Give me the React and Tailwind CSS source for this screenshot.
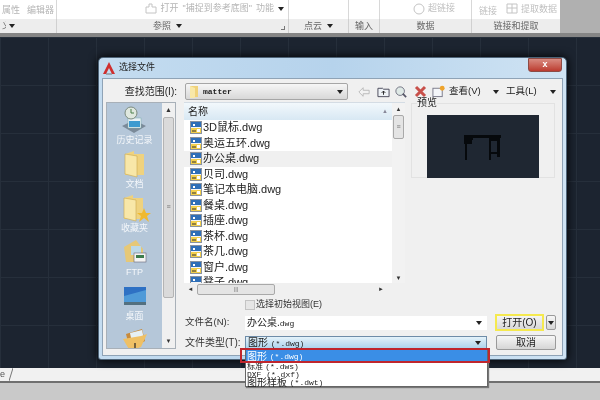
const FONT = "font-['Liberation_Sans','Noto_Sans_CJK_SC',sans-serif]";

function FileIcon() {
  return (
    <svg width="12" height="13" viewBox="0 0 12 13" className="shrink-0">
      <rect x="0.5" y="0.5" width="11" height="12" fill="#f4f4f4" stroke="#8a93a0" />
      <rect x="1" y="1" width="10" height="5" fill="#2f6fb8" />
      <rect x="1" y="7" width="10" height="5" fill="#f2cf4d" />
      <path d="M3 3h2v2H3zM7 8h3v3H7z" fill="#fff" />
      <path d="M2 10h4" stroke="#333" strokeWidth="1" />
    </svg>
  );
}

function Folder({ className = "" }) {
  return (
    <svg width="24" height="28" viewBox="0 0 24 28" className={className}>
      <path d="M2 4l9-3v3h10v21H2z" fill="#efd27e" />
      <path d="M2 4l12 2v21L2 24z" fill="#f8e7a8" stroke="#c9a84e" strokeWidth="0.6" />
    </svg>
  );
}

function Arrow({ className = "" }) {
  return <span className={`shrink-0 w-0 h-0 border-l-[3px] border-r-[3px] border-t-[4px] border-l-transparent border-r-transparent border-t-[#222] ${className}`} />;
}

function HistoryIcon() {
  return (
    <svg width="26" height="28" viewBox="0 0 26 28">
      <path d="M1 20l12-6 12 6-12 7z" fill="#7b8a99" />
      <rect x="7" y="12" width="13" height="10" fill="#e9f1f6" stroke="#7aa" strokeWidth="0.5" />
      <rect x="8" y="15" width="11" height="6" fill="#3d9ad0" />
      <circle cx="10" cy="7" r="6" fill="#dfe8df" stroke="#7d8c80" />
      <path d="M10 3v4h3" stroke="#4b7f4b" fill="none" />
    </svg>
  );
}

function StarFolder() {
  return (
    <div className="relative">
      <Folder />
      <svg width="14" height="14" viewBox="0 0 14 14" className="absolute right-[-5px] bottom-[0px]">
        <path d="M7 0l2 5h5l-4 3 2 6-5-4-5 4 2-6-4-3h5z" fill="#f0b92f" />
      </svg>
    </div>
  );
}

function FtpIcon() {
  return (
    <svg width="26" height="26" viewBox="0 0 26 26">
      <path d="M2 8l12-7 7 9v13H4z" fill="#e6c877" />
      <rect x="9" y="7" width="10" height="9" fill="#bcd9e8" />
      <rect x="12" y="14" width="12" height="9" fill="#f3f3f3" stroke="#667" strokeWidth="0.6" />
      <rect x="14" y="16" width="8" height="3" fill="#3d7d4d" />
    </svg>
  );
}

function DesktopIcon() {
  return (
    <svg width="22" height="18" viewBox="0 0 22 18">
      <rect x="0" y="0" width="22" height="15" fill="#2e71c4" />
      <path d="M0 9l22-6v12H0z" fill="#4f9ad8" />
      <rect x="0" y="15" width="22" height="3" fill="#54707f" />
    </svg>
  );
}

function OpenFolderIcon() {
  return (
    <svg width="26" height="24" viewBox="0 0 26 24">
      <path d="M4 6l16-5 3 12-15 9z" fill="#c88a3a" />
      <path d="M8 5l12-3 2 9-12 4z" fill="#e6f0f6" />
      <path d="M1 11l18-3 6-2-6 13-11 4z" fill="#efc065" />
      <path d="M13 15v6" stroke="#222" strokeWidth="1.2" />
    </svg>
  );
}

function SideItem({ icon, label }) {
  return (
    <div className="flex flex-col items-center h-[44px] shrink-0">
      <div className="h-[28px] flex items-center justify-center">{icon}</div>
      <span className="text-[9px] leading-[12px] text-[#f4f7fa]">{label}</span>
    </div>
  );
}

function Btn({ children, className = "" }) {
  return <div className={`flex items-center justify-center border border-[#9a9a9a] rounded-[2px] bg-gradient-to-b from-[#f6f6f6] to-[#d6d6d6] ${className}`}>{children}</div>;
}

const FILES = ["3D鼠标.dwg", "奥运五环.dwg", "办公桌.dwg", "贝司.dwg", "笔记本电脑.dwg", "餐桌.dwg", "插座.dwg", "茶杯.dwg", "茶几.dwg", "窗户.dwg", "凳子.dwg"];

function Ribbon() {
  return (
    <div className="h-[37px] shrink-0 flex flex-col bg-white text-[#8f8f8f] text-[9px] overflow-hidden border-b-[4px] border-[#858585]">
      <div className="flex h-[19px] shrink-0">
        <div className="w-[57px] border-r border-[#d8d8d8] pl-[2px] leading-[10px] text-[#b5b5b5]">
          <div className="mt-[5px] flex gap-[7px]"><span>属性</span><span>编辑器</span></div>
        </div>
        <div className="w-[232px] border-r border-[#d8d8d8] flex items-start justify-end pr-[4px] pt-[3px] text-[#b5b5b5] gap-[4px] leading-[11px]">
          <svg width="12" height="11" viewBox="0 0 12 11"><path d="M1 4h3V1h3v3h4v6H1z" fill="none" stroke="#c4c4c4" /></svg>
          <span>打开</span>
          <span>"捕捉到参考底图"</span>
          <span>功能</span>
          <Arrow className="mt-[4px]" />
        </div>
        <div className="w-[60px] border-r border-[#d8d8d8]" />
        <div className="w-[31px] border-r border-[#d8d8d8]" />
        <div className="w-[92px] border-r border-[#d8d8d8] flex justify-end items-start gap-[3px] pr-[16px] pt-[3px] text-[#c0c0c0] leading-[11px]">
          <svg width="12" height="12" viewBox="0 0 12 12"><circle cx="6" cy="6" r="5" fill="none" stroke="#c4c4c4" /></svg>
          <span>超链接</span>
        </div>
        <div className="w-[88px] flex pl-[7px] pt-[6px] text-[#c0c0c0] leading-[10px]">
          <span>链接</span>
          <svg width="12" height="11" viewBox="0 0 12 11" className="ml-[9px] mt-[-3px]"><path d="M1 1h10v9H1zM1 5h10M6 1v9" fill="none" stroke="#c4c4c4" /></svg>
          <span className="ml-[3px] mt-[-2px]">提取数据</span>
        </div>
        <div className="flex-1 bg-[#b0b0b0]" />
      </div>
      <div className="flex flex-1 bg-[#ededed] text-[9px] text-[#666] leading-[13px]">
        <div className="w-[57px] border-r border-[#d0d0d0] flex items-center pl-[2px] gap-[3px]"><span className="w-[4px] overflow-hidden">义</span><Arrow /></div>
        <div className="relative w-[232px] border-r border-[#d0d0d0] flex items-center justify-center gap-[5px] pr-[10px]">
          <span>参照</span><Arrow />
          <span className="absolute right-[3px] bottom-[3px] w-[4px] h-[4px] border-r border-b border-[#777]" />
        </div>
        <div className="w-[60px] border-r border-[#d0d0d0] flex items-center justify-center gap-[5px]"><span>点云</span><Arrow /></div>
        <div className="w-[31px] border-r border-[#d0d0d0] flex items-center justify-center"><span>输入</span></div>
        <div className="w-[92px] border-r border-[#d0d0d0] flex items-center justify-center"><span>数据</span></div>
        <div className="w-[88px] flex items-center justify-center"><span>链接和提取</span></div>
        <div className="flex-1 bg-[#b0b0b0]" />
      </div>
    </div>
  );
}

function Toolbar() {
  return (
    <div className="flex items-center ml-[10px] text-[9.5px] text-[#222] shrink-0">
      <svg width="12" height="12" viewBox="0 0 14 12"><path d="M1 6l5-5v3h7v4H6v3z" fill="#f2f2f2" stroke="#b4b4b4" /></svg>
      <svg width="13" height="12" viewBox="0 0 14 12" className="ml-[7px]"><path d="M1 2h5l1 1h6v8H1z" fill="#eef2f6" stroke="#445" /><path d="M7 9V5M5 7l2-2 2 2" stroke="#222" fill="none" /></svg>
      <svg width="12" height="14" viewBox="0 0 14 14" className="ml-[5px]"><circle cx="6" cy="6" r="5" fill="#dfe9e6" stroke="#667" /><path d="M9 9l4 4" stroke="#556" strokeWidth="2" /></svg>
      <svg width="13" height="13" viewBox="0 0 13 13" className="ml-[7px]"><path d="M2 2l9 9M11 2l-9 9" stroke="#c8504a" strokeWidth="3" /></svg>
      <svg width="13" height="13" viewBox="0 0 14 13" className="ml-[5px]"><rect x="1" y="3" width="10" height="9" fill="#f5f7fa" stroke="#778" /><circle cx="11" cy="3" r="2.6" fill="#eea32b" /></svg>
      <span className="whitespace-nowrap ml-[4px] w-[32px]">查看(V)</span>
      <Arrow className="ml-[12px]" />
      <span className="whitespace-nowrap ml-[7px] w-[32px]">工具(L)</span>
      <Arrow className="ml-[12px]" />
    </div>
  );
}

function Sidebar() {
  return (
    <div className="w-[70px] border border-[#a8b0b8] flex shrink-0 bg-white">
      <div className="flex-1 bg-[#b5c7d9] flex flex-col items-center pt-[3px] overflow-hidden">
        <SideItem icon={<HistoryIcon />} label="历史记录" />
        <SideItem icon={<Folder />} label="文档" />
        <SideItem icon={<StarFolder />} label="收藏夹" />
        <SideItem icon={<FtpIcon />} label="FTP" />
        <SideItem icon={<DesktopIcon />} label="桌面" />
        <SideItem icon={<OpenFolderIcon />} label="" />
      </div>
      <div className="w-[13px] bg-[#f0f0f0] flex flex-col items-center">
        <span className="text-[7px] leading-[14px] text-[#333]">▲</span>
        <div className="w-[11px] h-[181px] border border-[#b4b4b4] rounded-[2px] bg-[#dadada] flex items-center justify-center text-[7px] text-[#777]">≡</div>
        <div className="flex-1" />
        <span className="text-[6px] leading-[14px] text-[#333]">▼</span>
      </div>
    </div>
  );
}

function FileList() {
  return (
    <div className="w-[221px] h-[193px] border-t border-[#d4dce4] bg-white flex flex-col shrink-0">
      <div className="flex flex-1 min-h-0">
        <div className="flex-1 min-w-0 flex flex-col overflow-hidden">
          <div className="h-[17px] shrink-0 bg-gradient-to-b from-[#f2f8fc] to-[#d8e8f3] flex items-center justify-between pl-[4px] pr-[4px] text-[10px] text-[#222]">
            <span>名称</span><span className="text-[6px] text-[#889]">▲</span>
          </div>
          <div className="flex flex-col">
            {FILES.map((f) => (
              <div key={f} className={`h-[15.5px] shrink-0 flex items-center pl-[6px] gap-[1px] text-[11px] leading-none text-[#222] whitespace-nowrap ${f === "办公桌.dwg" ? "bg-[#f0f0f0]" : ""}`}>
                <FileIcon /><span>{f}</span>
              </div>
            ))}
          </div>
        </div>
        <div className="w-[13px] bg-[#f2f2f2] flex flex-col items-center shrink-0">
          <span className="text-[6px] leading-[12px] text-[#333]">▲</span>
          <div className="w-[11px] h-[24px] border border-[#a9a9a9] rounded-[2px] bg-[#e4e4e4] flex items-center justify-center text-[7px] text-[#777]">≡</div>
          <div className="flex-1" />
          <span className="text-[6px] leading-[10px] text-[#333]">▼</span>
        </div>
      </div>
      <div className="h-[12px] shrink-0 bg-[#f0f0f0] flex items-center">
        <span className="w-[13px] text-[6px] text-center text-[#333]">◄</span>
        <div className="w-[78px] h-[11px] border border-[#a9a9a9] rounded-[2px] bg-[#e4e4e4] flex items-center justify-center text-[6px] text-[#777]">|||</div>
        <div className="flex-1" />
        <span className="w-[27px] text-[6px] text-left text-[#333]">►</span>
      </div>
    </div>
  );
}

function Preview() {
  return (
    <div className="relative w-[144px] h-[100px] ml-[6px] mt-[-3px] shrink-0">
      <span className="absolute left-[6px] top-[-2px] text-[10px] leading-[12px] text-[#222] z-10 bg-[#f0f0f0]">预览</span>
      <div className="mt-[4px] h-[75px] pt-[11px] border border-[#e2e2e2] flex justify-center">
        <div className="w-[112px] h-[63px] bg-[#1f2732] flex items-center justify-center">
          <svg width="40" height="26" viewBox="0 0 40 26">
            <path d="M1 1h37v3H1zM1 4h8v6H1zM2 10h2v16H2zM27 4h10v19h-3V7h-7zM26 4h2v23h-2zM26 18h11v2H26zM9 4h1v2H9z" fill="#06090c" />
          </svg>
        </div>
      </div>
    </div>
  );
}

function BottomRows() {
  return (
    <div className="flex flex-col text-[10px] text-[#222]">
      <div className="flex items-center h-[15px] pl-[60px] gap-[1px]">
        <span className="w-[10px] h-[10px] border border-[#c4c4c4] bg-[#e6e6e6]" />
        <span className="text-[#333] text-[9px]">选择初始视图(E)</span>
      </div>
      <div className="flex items-center h-[17px] mt-[2px]">
        <span className="w-[60px] text-[#333] text-[9.5px]">文件名(N):</span>
        <div className="w-[242px] h-[14px] bg-white flex items-center justify-between pl-[2px] pr-[5px]">
          <span>办公桌.<span className="font-['Liberation_Mono'] text-[8px]">dwg</span></span>
          <Arrow />
        </div>
        <div className="ml-[8px] w-[49px] h-[17px] border-2 border-[#f5e94f] bg-gradient-to-b from-[#f4f4f4] to-[#d8d8d8] flex items-center justify-center">打开(O)</div>
        <Btn className="ml-[2px] w-[10px] h-[15px]"><Arrow /></Btn>
      </div>
      <div className="flex items-center h-[15px] mt-[4px]">
        <span className="w-[60px] text-[#333]">文件类型(T):</span>
        <div className="w-[242px] h-[14px] border border-[#6e8ca8] bg-gradient-to-b from-[#e4f2fa] to-[#a9d2ec] flex items-center justify-between pl-[2px] pr-[5px]">
          <span className="whitespace-pre">图形 <span className="font-['Liberation_Mono'] text-[8px]">(*.dwg)</span></span>
          <Arrow />
        </div>
        <Btn className="ml-[9px] w-[60px] h-[15px]">取消</Btn>
      </div>
    </div>
  );
}

function Dropdown() {
  const mono = "font-['Liberation_Mono'] text-[8px]";
  return (
    <div className="absolute left-[147px] top-[292px] w-[243px] h-[38px] bg-white border border-[#666] text-[10px] text-[#222] leading-[9px] z-20 shadow-[1px_1px_1px_#777] whitespace-pre">
      <div className="h-[12px] bg-[#3a8ee6] text-white flex items-center pl-[1px]">图形 <span className={mono}>(*.dwg)</span></div>
      <div className="h-[8px] flex items-center pl-[1px] text-[8px]">标准 <span className={mono}>(*.dws)</span></div>
      <div className="h-[8px] flex items-center pl-[1px]"><span className={mono}>DXF (*.dxf)</span></div>
      <div className="h-[9px] flex items-center pl-[1px]">图形样板 <span className={mono}>(*.dwt)</span></div>
      <div className="absolute left-[-6px] right-[-3px] top-[-2px] h-[15px] border-2 border-[#c0262d]" />
    </div>
  );
}

function DialogFull() {
  return (
    <div className="w-[469px] h-[303px] rounded-t-[5px] rounded-b-[3px] bg-gradient-to-r from-[#c4dcf0] via-[#b6d3ec] to-[#cfe3f3] border border-[#4e6478] px-[3px] pb-[3px] flex flex-col shadow-[0_0_10px_#000]">
      <div className="h-[20px] shrink-0 flex items-center">
        <svg width="12" height="13" viewBox="0 0 12 13" className="ml-[1px]">
          <path d="M6 0L0 12h3l3-6 3 6h3z" fill="#cf2f2f" />
          <path d="M3 12h6" stroke="#777" />
        </svg>
        <span className="ml-[4px] text-[9px] text-[#222]">选择文件</span>
        <div className="ml-auto mr-[1px] mt-[-6px] w-[34px] h-[14px] rounded-b-[3px] bg-gradient-to-b from-[#d88a80] to-[#bb3a2f] border border-[#8d4b45] flex items-center justify-center text-white text-[9px] font-bold">x</div>
      </div>
      <div className="flex-1 bg-[#f0f0f0] border border-[#8fa3b6] flex flex-col pl-[3px] pt-[4px] min-h-0">
        <div className="flex items-center h-[17px] shrink-0 text-[10px] text-[#222]">
          <span className="w-[79px] shrink-0 text-right pr-[8px] whitespace-nowrap">查找范围(I):</span>
          <div className="w-[163px] shrink-0 h-[17px] border border-[#a6a6a6] rounded-[2px] bg-gradient-to-b from-[#f6f6f6] to-[#d8d8d8] flex items-center pl-[3px] pr-[4px]">
            <svg width="10" height="13" viewBox="0 0 10 13"><path d="M1 1h8v11H1z" fill="#f0d27a" /><path d="M1 1l5 2v10H1z" fill="#f8e8a8" /></svg>
            <span className="ml-[4px] font-['Liberation_Mono'] text-[8px] font-bold">matter</span>
            <Arrow className="ml-auto" />
          </div>
          <Toolbar />
        </div>
        <div className="flex mt-[2px] flex-1 min-h-0 pb-[6px]">
          <Sidebar />
          <div className="w-[8px] shrink-0" />
          <div className="flex flex-col w-[372px] min-w-0">
            <div className="flex"><FileList /><Preview /></div>
            <div className="ml-[1px] mt-[2px] w-[372px]"><BottomRows /></div>
          </div>
        </div>
      </div>
    </div>
  );
}

export default function App() {
  return (
    <div className={`w-[600px] h-[400px] overflow-hidden flex flex-col bg-[#c9c9c9] blur-[0.5px] ${FONT}`}>
      <Ribbon />
      <div className="relative h-[331px] shrink-0 pl-[98px] pt-[20px] bg-[#1c2430] bg-[linear-gradient(#262f3b_1px,transparent_1px),linear-gradient(90deg,#262f3b_1px,transparent_1px)] bg-[size:48px_48px]">
        <div className="relative">
          <DialogFull />
          <Dropdown />
        </div>
      </div>
      <div className="h-[13px] shrink-0 bg-[#f1f1f1] flex items-center text-[9px] text-[#555]">
        <span className="w-[9px] overflow-hidden">e</span>
        <svg width="4" height="13" viewBox="0 0 4 13"><path d="M0 13L4 0" stroke="#777" /></svg>
      </div>
      <div className="h-[2px] shrink-0 bg-[#6f6f6f]" />
      <div className="flex-1 bg-[#c9c9c9]" />
    </div>
  );
}
